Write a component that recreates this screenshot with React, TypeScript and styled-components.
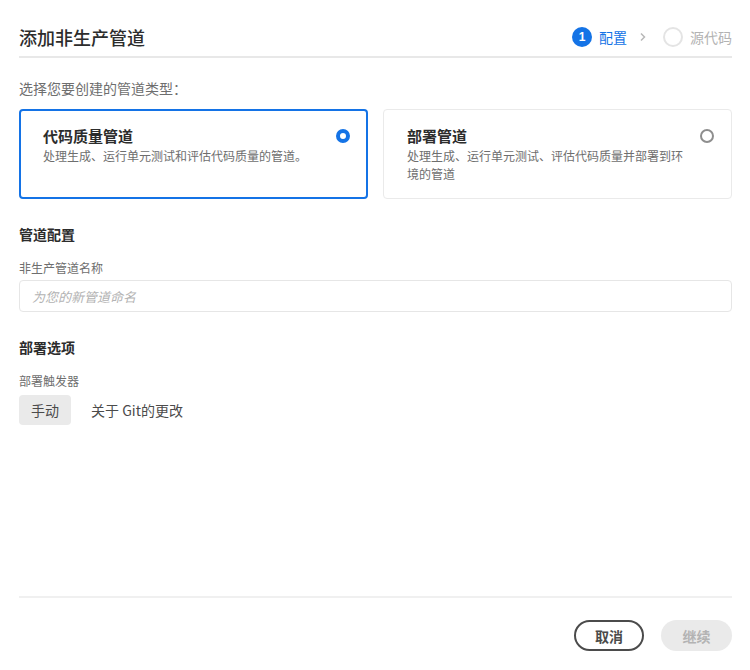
import styled, { createGlobalStyle } from "styled-components";

const GlobalStyle = createGlobalStyle`
  html, body {
    margin: 0;
    padding: 0;
    background: #ffffff;
  }
  body {
    font-family: "Noto Sans CJK SC", "Noto Sans", sans-serif;
    color: #4b4b4b;
  }
`

function App() {
  return (
    <>
      <GlobalStyle />
      <Page>
        <Header>
          <Title>添加非生产管道</Title>
          <Stepper>
            <StepDot active>1</StepDot>
            <StepLabel active>配置</StepLabel>
            <Chevron width="8" height="10" viewBox="0 0 8 10">
              <polyline points="2,1.5 5.5,5 2,8.5" fill="none" stroke="#b8b8b8" strokeWidth="1.5" />
            </Chevron>
            <StepDot />
            <StepLabel>源代码</StepLabel>
          </Stepper>
        </Header>

        <Prompt>选择您要创建的管道类型：</Prompt>
        <CardGrid>
          <Card selected>
            <CardText>
              <CardTitle>代码质量管道</CardTitle>
              <CardDesc>处理生成、运行单元测试和评估代码质量的管道。</CardDesc>
            </CardText>
            <Radio selected />
          </Card>
          <Card>
            <CardText>
              <CardTitle>部署管道</CardTitle>
              <CardDesc>处理生成、运行单元测试、评估代码质量并部署到环境的管道</CardDesc>
            </CardText>
            <Radio />
          </Card>
        </CardGrid>

        <SectionTitle>管道配置</SectionTitle>
        <FieldLabel>非生产管道名称</FieldLabel>
        <TextInput placeholder="为您的新管道命名" />

        <SectionTitle>部署选项</SectionTitle>
        <FieldLabel>部署触发器</FieldLabel>
        <ToggleRow>
          <ToggleButton selected>手动</ToggleButton>
          <ToggleButton>关于 Git的更改</ToggleButton>
        </ToggleRow>

        <Footer>
          <CancelButton>取消</CancelButton>
          <ContinueButton disabled>继续</ContinueButton>
        </Footer>
      </Page>
    </>
  )
}

const Page = styled.div`
  min-height: 670px;
  box-sizing: border-box;
  padding: 0 18px 0 19px;
  display: flex;
  flex-direction: column;
`

const Header = styled.div`
  padding-top: 18px;
  height: 38px;
  border-bottom: 2px solid #e8e8e8;
  display: flex;
  align-items: center;
  justify-content: space-between;
`

const Title = styled.h1`
  margin: 0;
  font-size: 18px;
  font-weight: 500;
  color: #2c2c2c;
  line-height: 26px;
`

const Stepper = styled.div`
  display: flex;
  align-items: center;
`

const StepDot = styled.span<{ active?: boolean }>`
  width: 20px;
  height: 20px;
  box-sizing: border-box;
  border-radius: 50%;
  display: flex;
  align-items: center;
  justify-content: center;
  font-family: "Liberation Sans", sans-serif;
  font-size: 12px;
  font-weight: 700;
  color: #ffffff;
  background: ${p => (p.active ? "#1473e6" : "#ffffff")};
  border: ${p => (p.active ? "none" : "2px solid #e4e4e4")};
  margin-left: ${p => (p.active ? "0" : "16px")};
`

const StepLabel = styled.span<{ active?: boolean }>`
  margin-left: 7px;
  font-size: 14px;
  line-height: 20px;
  color: ${p => (p.active ? "#1473e6" : "#b3b3b3")};
`

const Chevron = styled.svg`
  margin-left: 12px;
`

const Prompt = styled.div`
  margin-top: 20px;
  font-size: 14px;
  line-height: 20px;
  color: #6e6e6e;
`

const CardGrid = styled.div`
  margin-top: 11px;
  display: grid;
  grid-template-columns: 1fr 1fr;
  gap: 15px;
`

const Card = styled.div<{ selected?: boolean }>`
  height: 90px;
  box-sizing: border-box;
  border-radius: 4px;
  border: ${p => (p.selected ? "2px solid #1473e6" : "1px solid #eaeaea")};
  padding: ${p => (p.selected ? "15px 16px 0 22px" : "16px 17px 0 23px")};
  display: flex;
  align-items: flex-start;
  gap: 16px;
`

const CardText = styled.div`
  flex: 1;
  min-width: 0;
`

const CardTitle = styled.div`
  font-size: 15px;
  font-weight: 700;
  line-height: 20px;
  color: #2c2c2c;
`

const CardDesc = styled.div`
  margin-top: 1px;
  font-size: 12px;
  line-height: 18px;
  color: #6e6e6e;
`

const Radio = styled.span<{ selected?: boolean }>`
  flex: none;
  margin-top: 3px;
  width: 14px;
  height: 14px;
  box-sizing: border-box;
  border-radius: 50%;
  border: ${p => (p.selected ? "4px solid #1473e6" : "2px solid #8e8e8e")};
  background: #ffffff;
`

const SectionTitle = styled.div`
  margin-top: 24px;
  font-size: 14px;
  font-weight: 700;
  line-height: 22px;
  color: #2c2c2c;
`

const FieldLabel = styled.div`
  margin-top: 14px;
  font-size: 12px;
  line-height: 18px;
  color: #6e6e6e;
`

const TextInput = styled.input`
  margin-top: 3px;
  height: 32px;
  box-sizing: border-box;
  border: 1px solid #e6e6e6;
  border-radius: 4px;
  padding: 0 12px;
  font-family: inherit;
  font-size: 13px;
  outline: none;

  &::placeholder {
    color: #b3b3b3;
    font-style: italic;
  }
`

const ToggleRow = styled.div`
  margin-top: 5px;
  display: flex;
  gap: 8px;
`

const ToggleButton = styled.div<{ selected?: boolean }>`
  height: 30px;
  padding: 0 12px;
  border-radius: 4px;
  display: flex;
  align-items: center;
  font-size: 14px;
  color: #4b4b4b;
  background: ${p => (p.selected ? "#eaeaea" : "transparent")};
`

const Footer = styled.div`
  margin-top: auto;
  border-top: 2px solid #f0f0f0;
  padding: 22px 0 19px;
  display: flex;
  justify-content: flex-end;
  gap: 17px;
`

const CancelButton = styled.button`
  height: 31px;
  width: 70px;
  border-radius: 16px;
  border: 2px solid #4b4b4b;
  background: #ffffff;
  font-family: inherit;
  font-size: 14px;
  font-weight: 700;
  color: #4b4b4b;
`

const ContinueButton = styled.button`
  height: 31px;
  width: 71px;
  border-radius: 16px;
  border: none;
  background: #eaeaea;
  font-family: inherit;
  font-size: 14px;
  font-weight: 700;
  color: #b3b3b3;
`

export default App
